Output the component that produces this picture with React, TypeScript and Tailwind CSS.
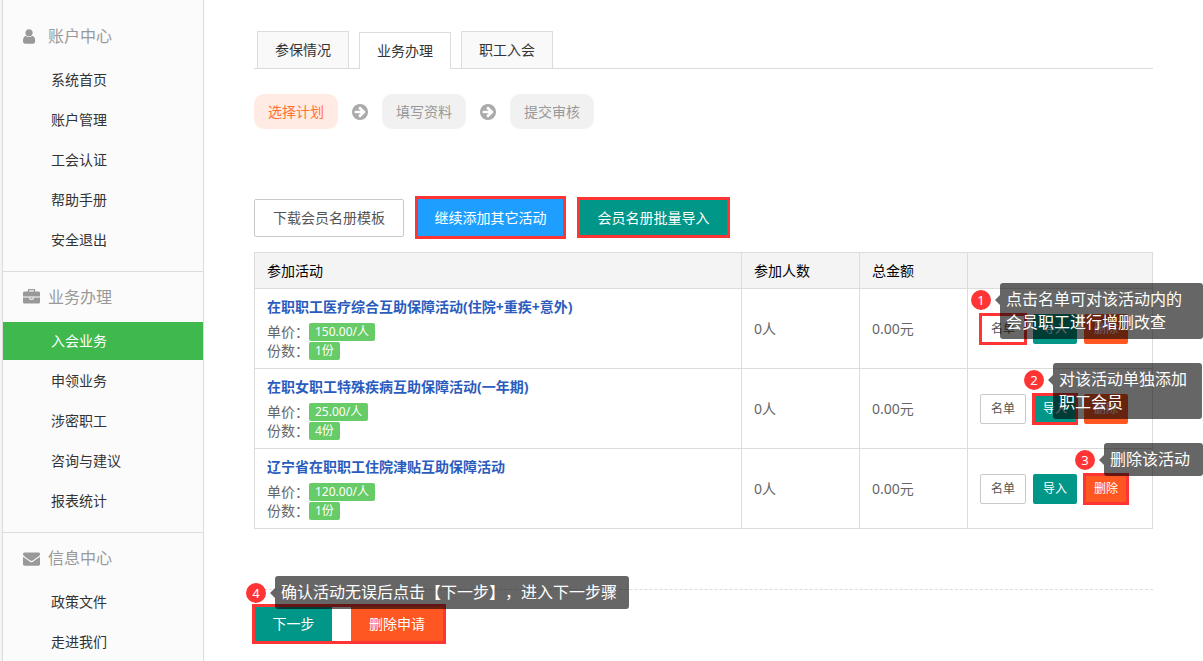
import { useState } from 'react';
import type { ReactNode } from 'react';

const USER_PATH =
  'M1536 1399q0 109-62.5 187t-150.5 78h-854q-88 0-150.5-78t-62.5-187q0-85 8.5-160.5t31.5-152 58.5-131 94-89 134.5-34.5q131 128 313 128t313-128q76 0 134.5 34.5t94 89 58.5 131 31.5 152 8.5 160.5zm-256-887q0 159-112.5 271.5t-271.5 112.5-271.5-112.5-112.5-271.5 112.5-271.5 271.5-112.5 271.5 112.5 112.5 271.5z';
const BRIEFCASE_PATH =
  'M640 256h512v-128h-512v128zm1152 640v480q0 66-47 113t-113 47h-1472q-66 0-113-47t-47-113v-480h672v160q0 26 19 45t45 19h320q26 0 45-19t19-45v-160h672zm-768 0v128h-256v-128h256zm768-480v384h-1792v-384q0-66 47-113t113-47h352v-160q0-40 28-68t68-28h576q40 0 68 28t28 68v160h352q66 0 113 47t47 113z';
const ENVELOPE_PATH =
  'M1792 710v794q0 66-47 113t-113 47h-1472q-66 0-113-47t-47-113v-794q44 49 101 87 362 246 497 345 57 42 92.5 65.5t94.5 48 110 24.5h2q51 0 110-24.5t94.5-48 92.5-65.5q170-123 498-345 57-39 100-87zm0-294q0 79-49 151t-122 123q-376 261-468 325-10 7-42.5 31t-54 38.5-52 32.5-57.5 27-50 9h-2q-23 0-50-9t-57.5-27-52-32.5-54-38.5-42.5-31q-91-64-262-182.5t-205-142.5q-62-42-117-115.5t-55-136.5q0-78 41.5-130t118.5-52h1472q65 0 112.5 47t47.5 113z';
const ARROW_PATH =
  'M1413 896q0-27-18-45l-91-91-362-362q-18-18-45-18t-45 18l-91 91q-18 18-18 45t18 45l189 189h-502q-26 0-45 19t-19 45v128q0 26 19 45t45 19h502l-189 189q-19 19-19 45t19 45l91 91q18 18 45 18t45-18l362-362 91-91q18-18 18-45zm251 0q0 209-103 385.5t-279.5 279.5-385.5 103-385.5-103-279.5-279.5-103-385.5 103-385.5 279.5-279.5 385.5-103 385.5 103 279.5 279.5 103 385.5z';

const groups = [
  {
    title: '账户中心',
    icon: USER_PATH,
    viewBox: '256 0 1792 1792',
    items: ['系统首页', '账户管理', '工会认证', '帮助手册', '安全退出'],
  },
  {
    title: '业务办理',
    icon: BRIEFCASE_PATH,
    viewBox: '0 0 1792 1792',
    items: ['入会业务', '申领业务', '涉密职工', '咨询与建议', '报表统计'],
  },
  {
    title: '信息中心',
    icon: ENVELOPE_PATH,
    viewBox: '0 0 1792 1792',
    items: ['政策文件', '走进我们'],
  },
];

const tabs = ['参保情况', '业务办理', '职工入会'];
const steps = ['选择计划', '填写资料', '提交审核'];

const activities = [
  { name: '在职职工医疗综合互助保障活动(住院+重疾+意外)', price: '150.00/人', copies: '1份' },
  { name: '在职女职工特殊疾病互助保障活动(一年期)', price: '25.00/人', copies: '4份' },
  { name: '辽宁省在职职工住院津贴互助保障活动', price: '120.00/人', copies: '1份' },
];

function Sidebar() {
  const [active, setActive] = useState('入会业务');

  return (
    <aside className="w-[202px] shrink-0 border-x border-[#dcdcdc] bg-[#fbfbfb] pt-[11px]">
      {groups.map((group) => (
        <section key={group.title} className="border-t border-[#dcdcdc] pb-3 first:border-t-0 last:pb-0">
          <h2 className="flex h-[50px] items-center gap-2 pl-5 text-base text-[#999]">
            <svg className="size-[17px]" viewBox={group.viewBox} fill="currentColor" aria-hidden="true">
              <path d={group.icon} />
            </svg>
            {group.title}
          </h2>
          <ul className="flex flex-col gap-0.5">
            {group.items.map((item) => (
              <li key={item}>
                <a
                  href="#"
                  onClick={() => setActive(item)}
                  className={`flex h-[38px] items-center pl-12 text-sm ${active === item ? 'bg-[#3fb94e] text-white' : 'text-[#333]'}`}
                >
                  {item}
                </a>
              </li>
            ))}
          </ul>
        </section>
      ))}
    </aside>
  );
}

function Callout({ num, width, children }: { num: number; width: string; children: ReactNode }) {
  return (
    <div className="absolute -top-[31px] -left-[9px] z-10 flex items-start text-white">
      <span className="mt-[7px] flex size-5 items-center justify-center rounded-full bg-[#ff3535] text-[13px] leading-5">
        {num}
      </span>
      <span className="mt-3 ml-1 border-y-5 border-r-5 border-y-transparent border-r-black/60" />
      <p className={`rounded-[3px] bg-black/60 px-1.5 py-[5px] text-base leading-[23px] ${width}`}>{children}</p>
    </div>
  );
}

function Highlight() {
  return <span className="pointer-events-none absolute -inset-px border-3 border-[#ff3535]" />;
}

function RowActions({ row }: { row: number }) {
  return (
    <div className="flex gap-[7px] text-xs">
      <div className="relative">
        <button className="h-[30px] w-[46px] rounded-xs border border-[#c9c9c9] bg-white text-[#555]">名单</button>
        {row === 0 && (
          <>
            <Highlight />
            <Callout num={1} width="w-[203px]">点击名单可对该活动内的会员职工进行增删改查</Callout>
          </>
        )}
      </div>
      <div className="relative">
        <button className="h-[30px] w-11 rounded-xs bg-[#009688] text-white">导入</button>
        {row === 1 && (
          <>
            <Highlight />
            <Callout num={2} width="w-[149px]">对该活动单独添加职工会员</Callout>
          </>
        )}
      </div>
      <div className="relative">
        <button className="h-[30px] w-11 rounded-xs bg-[#ff5722] text-white">删除</button>
        {row === 2 && (
          <>
            <Highlight />
            <Callout num={3} width="w-[99px]">删除该活动</Callout>
          </>
        )}
      </div>
    </div>
  );
}

export default function App() {
  const [tab, setTab] = useState('业务办理');

  return (
    <div className="flex min-h-screen overflow-x-hidden bg-white font-['Noto_Sans','Noto_Sans_CJK_SC',sans-serif] text-sm text-[#666] [text-spacing-trim:space-all]">
      <div className="w-0.5 shrink-0 bg-[#f4f4f4]" />
      <Sidebar />

      <main className="min-w-0 flex-1 px-[50px] pt-[31px]">
        {/* Tabs */}
        <nav className="flex items-end gap-2.5 border-b border-[#dcdcdc] pl-[3px]">
          {tabs.map((t) => (
            <button
              key={t}
              onClick={() => setTab(t)}
              className={`h-[37px] border border-b-0 border-[#dcdcdc] px-[17px] text-[#333] ${tab === t ? '-mb-px bg-white' : 'bg-[#f9f9f9]'}`}
            >
              {t}
            </button>
          ))}
        </nav>

        {/* Steps */}
        <ol className="mt-[25px] flex items-center gap-3.5">
          {steps.map((step, i) => (
            <li key={step} className="flex items-center gap-3.5">
              {i > 0 && (
                <svg className="size-4 text-[#aaa]" viewBox="128 128 1536 1536" fill="currentColor" aria-hidden="true">
                  <path d={ARROW_PATH} />
                </svg>
              )}
              <span
                className={`flex h-[35px] items-center rounded-[10px] px-3.5 ${i === 0 ? 'bg-[#ffebe4] text-[#ff7233]' : 'bg-[#f1f1f1] text-[#999]'}`}
              >
                {step}
              </span>
            </li>
          ))}
        </ol>

        {/* Toolbar */}
        <div className="mt-[67px] flex items-center gap-[11px]">
          <button className="h-[38px] rounded-xs border border-[#c9c9c9] bg-white px-[18px] text-[#555]">
            下载会员名册模板
          </button>
          <button className="h-[43px] w-[151px] border-3 border-[#ff3535] bg-[#1e9fff] text-white">
            继续添加其它活动
          </button>
          <button className="h-[41px] w-[153px] border-3 border-[#ff3535] bg-[#009688] text-white">
            会员名册批量导入
          </button>
        </div>

        <table className="mt-[13px] w-full table-fixed border-collapse text-left">
          <colgroup>
            <col />
            <col className="w-[118px]" />
            <col className="w-[108px]" />
            <col className="w-[185px]" />
          </colgroup>
          <thead>
            <tr className="h-9 bg-[#f4f4f4] text-black">
              <th className="border border-[#dcdcdc] px-3 font-normal">参加活动</th>
              <th className="border border-[#dcdcdc] px-3 font-normal">参加人数</th>
              <th className="border border-[#dcdcdc] px-3 font-normal">总金额</th>
              <th className="border border-[#dcdcdc] px-3" />
            </tr>
          </thead>
          <tbody>
            {activities.map((a, i) => (
              <tr key={a.name} className="h-20">
                <td className="border border-[#dcdcdc] px-3 pb-0.5">
                  <a href="#" className="block leading-6 font-bold text-[#2a5cbe]">{a.name}</a>
                  <div className="mt-1 flex h-[19px] items-center">
                    单价：
                    <span className="rounded-xs bg-[#67cb67] px-1.5 text-xs leading-[18px] text-white">{a.price}</span>
                  </div>
                  <div className="flex h-[19px] items-center">
                    份数：
                    <span className="rounded-xs bg-[#67cb67] px-1.5 text-xs leading-[18px] text-white">{a.copies}</span>
                  </div>
                </td>
                <td className="border border-[#dcdcdc] px-3">0人</td>
                <td className="border border-[#dcdcdc] px-3">0.00元</td>
                <td className="border border-[#dcdcdc] px-3">
                  <RowActions row={i} />
                </td>
              </tr>
            ))}
          </tbody>
        </table>

        {/* Footer */}
        <div className="mt-[60px] border-t border-dashed border-[#dcdcdc] pt-3.5">
          <div className="relative -ml-0.5 flex w-fit gap-[19px] border-3 border-[#ff3535]">
            <button className="h-[34px] w-[77px] bg-[#009688] text-white">下一步</button>
            <button className="h-[34px] w-[92px] bg-[#ff5722] text-white">删除申请</button>
            <Callout num={4} width="w-[354px]">确认活动无误后点击【下一步】，进入下一步骤</Callout>
          </div>
        </div>
      </main>
    </div>
  );
}
